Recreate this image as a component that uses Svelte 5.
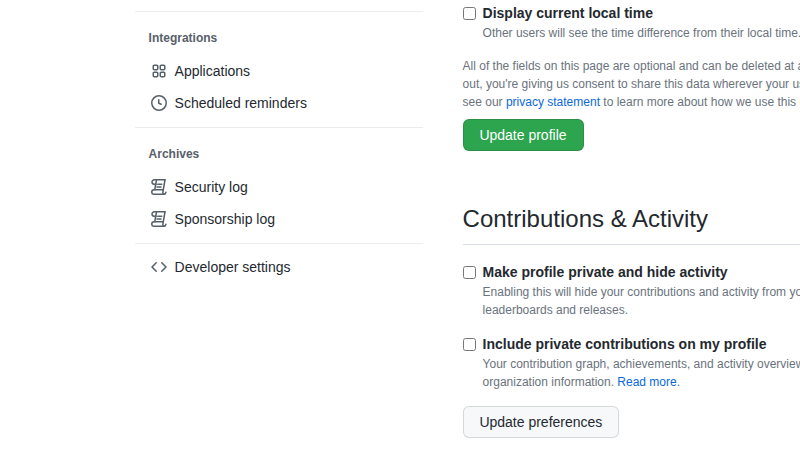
<script>
  const integrations = [
    { name: 'Applications', icon: 'apps' },
    { name: 'Scheduled reminders', icon: 'clock' }
  ];
  const archives = [
    { name: 'Security log', icon: 'log' },
    { name: 'Sponsorship log', icon: 'log' }
  ];
</script>

{#snippet icon(kind)}
  <svg class="icon" viewBox="0 0 16 16" width="16" height="16" aria-hidden="true">
    {#if kind === 'apps'}
      <path d="M1.5 3.25c0-.966.784-1.75 1.75-1.75h2.5c.966 0 1.75.784 1.75 1.75v2.5A1.75 1.75 0 0 1 5.75 7.5h-2.5A1.75 1.75 0 0 1 1.5 5.75Zm7 0c0-.966.784-1.75 1.75-1.75h2.5c.966 0 1.75.784 1.75 1.75v2.5a1.75 1.75 0 0 1-1.75 1.75h-2.5A1.75 1.75 0 0 1 8.5 5.75Zm-7 7c0-.966.784-1.75 1.75-1.75h2.5c.966 0 1.75.784 1.75 1.75v2.5a1.75 1.75 0 0 1-1.75 1.75h-2.5a1.75 1.75 0 0 1-1.75-1.75Zm7 0c0-.966.784-1.75 1.75-1.75h2.5c.966 0 1.75.784 1.75 1.75v2.5a1.75 1.75 0 0 1-1.75 1.75h-2.5a1.75 1.75 0 0 1-1.75-1.75ZM3.25 3a.25.25 0 0 0-.25.25v2.5c0 .138.112.25.25.25h2.5A.25.25 0 0 0 6 5.75v-2.5A.25.25 0 0 0 5.75 3Zm7 0a.25.25 0 0 0-.25.25v2.5c0 .138.112.25.25.25h2.5a.25.25 0 0 0 .25-.25v-2.5a.25.25 0 0 0-.25-.25Zm-7 7a.25.25 0 0 0-.25.25v2.5c0 .138.112.25.25.25h2.5a.25.25 0 0 0 .25-.25v-2.5a.25.25 0 0 0-.25-.25Zm7 0a.25.25 0 0 0-.25.25v2.5c0 .138.112.25.25.25h2.5a.25.25 0 0 0 .25-.25v-2.5a.25.25 0 0 0-.25-.25Z" />
    {:else if kind === 'clock'}
      <path d="M8 0a8 8 0 1 1 0 16A8 8 0 0 1 8 0ZM1.5 8a6.5 6.5 0 1 0 13 0 6.5 6.5 0 0 0-13 0Zm7-3.25v2.992l2.028.812a.75.75 0 0 1-.557 1.392l-2.5-1A.751.751 0 0 1 7 8.25v-3.5a.75.75 0 0 1 1.5 0Z" />
    {:else if kind === 'log'}
      <g class="stroke">
        <path d="M14 .75H3.25A2.25 2.25 0 0 0 1 3c0 1.2.8 2.2 2.25 2.25H5" />
        <path d="M5.5 1 3.75 10.75M14 .75 11.9 13c-.2 1.3.4 2.25 1.1 2.25" />
        <path d="M12.25 10.75H3A2.25 2.25 0 0 0 .75 13 2.25 2.25 0 0 0 3 15.25h10c.9 0 1.7-.8 1.9-1.9" />
        <path d="M6.75 5.25h4M6 8h4" />
      </g>
    {:else}
      <path d="m11.28 3.22 4.25 4.25a.75.75 0 0 1 0 1.06l-4.25 4.25a.749.749 0 0 1-1.06-1.06L13.94 8l-3.72-3.72a.749.749 0 0 1 1.06-1.06Zm-6.56 0a.751.751 0 0 1 1.06 1.06L2.06 8l3.72 3.72a.749.749 0 0 1-1.06 1.06L.47 8.53a.75.75 0 0 1 0-1.06Z" />
    {/if}
  </svg>
{/snippet}

{#snippet menu(title, items)}
  <section class="menu-group">
    <h3 class="menu-heading">{title}</h3>
    {#each items as item}
      <a class="menu-item" href="#top">
        {@render icon(item.icon)}
        <span>{item.name}</span>
      </a>
    {/each}
  </section>
{/snippet}

<div class="page">
  <nav class="sidebar">
    {@render menu('Integrations', integrations)}
    {@render menu('Archives', archives)}
    <a class="menu-item dev" href="#top">
      {@render icon('code')}
      <span>Developer settings</span>
    </a>
  </nav>

  <main class="content">
    <div class="check first">
      <input type="checkbox" />
      <div>
        <div class="check-label">Display current local time</div>
        <div class="note">Other users will see the time difference from their local time.</div>
      </div>
    </div>

    <p class="note legal">
      All of the fields on this page are optional and can be deleted at any time, and by filling them<br />
      out, you're giving us consent to share this data wherever your user profile appears. Please<br />
      see our <a href="#top">privacy statement</a> to learn more about how we use this information.
    </p>

    <button class="btn primary">Update profile</button>

    <h2 class="section-title">Contributions &amp; Activity</h2>

    <div class="check">
      <input type="checkbox" />
      <div>
        <div class="check-label">Make profile private and hide activity</div>
        <div class="note">
          Enabling this will hide your contributions and activity from your GitHub profile and from social features like followers, stars, feeds,<br />
          leaderboards and releases.
        </div>
      </div>
    </div>

    <div class="check">
      <input type="checkbox" />
      <div>
        <div class="check-label">Include private contributions on my profile</div>
        <div class="note">
          Your contribution graph, achievements, and activity overview will show your private contributions without revealing any repository or<br />
          organization information. <a href="#top">Read more.</a>
        </div>
      </div>
    </div>

    <button class="btn">Update preferences</button>
  </main>
</div>

<style>
  :global(body) {
    overflow: hidden;
    background: #fff;
  }

  .page {
    display: flex;
    height: 459px;
    overflow: hidden;
    padding-left: 134.6px;
    font-family: "Liberation Sans", Arial, sans-serif;
    font-size: 14px;
    color: #24292f;
  }

  .sidebar {
    flex: 0 0 288.6px;
    padding-top: 11px;
  }

  .menu-group {
    padding-bottom: 8px;
    border-top: 1px solid #eaecef;
  }

  .menu-heading {
    margin: 17px 0 8px;
    padding-left: 14px;
    font-size: 12px;
    line-height: 18px;
    font-weight: 700;
    color: #586069;
  }

  .menu-item {
    display: flex;
    align-items: center;
    gap: 8px;
    height: 32px;
    padding-left: 16px;
    color: #24292f;
    text-decoration: none;
  }

  .dev {
    padding-top: 14px;
    height: 17px;
    border-top: 1px solid #eaecef;
    box-sizing: content-box;
  }

  .icon {
    flex: none;
    fill: #57606a;
  }

  .stroke {
    fill: none;
    stroke: #57606a;
    stroke-width: 1.5;
    stroke-linecap: round;
    stroke-linejoin: round;
  }

  .content {
    flex: 0 0 900px;
    margin-left: 39.4px;
    padding-top: 3px;
  }

  .check {
    display: flex;
    gap: 7px;
    margin-bottom: 15px;
  }

  .check input {
    flex: none;
    width: 13px;
    height: 13px;
    margin: 4px 0 0;
  }

  .check-label {
    font-weight: 700;
    line-height: 21px;
  }

  .note {
    font-size: 12px;
    line-height: 18px;
    color: #6a737d;
  }

  .legal {
    margin: 0 0 8px;
  }

  a {
    color: #0969da;
    text-decoration: none;
  }

  .btn {
    display: block;
    height: 32px;
    padding: 0 15.8px;
    border: 1px solid rgba(27, 31, 36, 0.15);
    border-radius: 6px;
    background: #f6f8fa;
    font: inherit;
    line-height: 20px;
    color: #24292f;
  }

  .primary {
    padding: 0 16px 0 15.8px;
    width: 121px;
    background: #2da44e;
    color: #fff;
  }

  .section-title {
    margin: 50px 0 17px;
    padding-bottom: 7px;
    border-bottom: 1px solid #d8dee4;
    font-size: 24px;
    line-height: 36px;
    font-weight: 400;
  }
</style>
